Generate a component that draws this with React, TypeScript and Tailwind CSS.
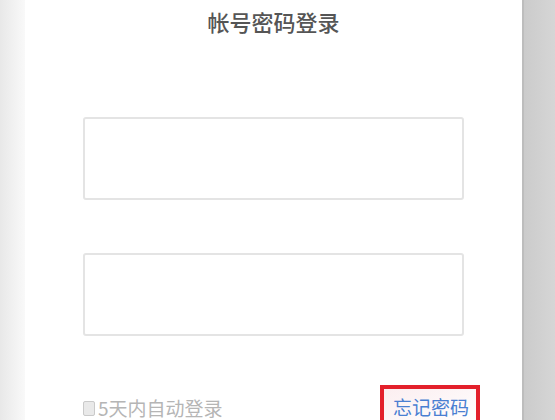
import React from 'react';

export default function App() {
  return (
    <div
      className="flex h-[420px] w-[555px] overflow-hidden bg-white"
      style={{ fontFamily: '"Noto Sans CJK SC", "Noto Sans", sans-serif' }}
    >
      {/* left backdrop */}
      <div className="w-[25px] shrink-0 bg-gradient-to-r from-[#e8e8e8] to-[#f9f9f9]" />

      {/* login card */}
      <div className="flex flex-1 flex-col bg-white">
        <h1 className="mt-[10px] text-center text-[22px] leading-[23px] font-medium text-[#555]">
          帐号密码登录
        </h1>

        <div className="mt-[84px] flex flex-col gap-[53px] px-[58px]">
          <input
            type="text"
            className="h-[83px] w-full rounded-[3px] border-2 border-[#e4e4e4] bg-white outline-none"
          />
          <input
            type="password"
            className="h-[83px] w-full rounded-[3px] border-2 border-[#e4e4e4] bg-white outline-none"
          />
        </div>

        <div className="mt-[49px] flex items-start justify-between pr-[42px] pl-[58px]">
          <label className="mt-[14px] flex items-center gap-[3px] text-[19px] leading-[18px] text-[#b5b5b5]">
            <span className="block h-[15px] w-[12px] shrink-0 rounded-[2px] border border-[#cacaca] bg-[#e9e9e9]" />
            5天内自动登录
          </label>
          <div className="h-[44px] w-[100px] border-4 border-[#e3202b] bg-gradient-to-br from-[#fbeef0] to-white pt-[8px] pl-[9px]">
            <a className="block text-[19px] leading-[19px] text-[#4a7fd2]">忘记密码</a>
          </div>
        </div>
      </div>

      {/* right backdrop */}
      <div className="w-[33px] shrink-0 border-l-2 border-[#bdbdbd] bg-gradient-to-r from-[#cbcbcb] to-[#d6d6d6]" />
    </div>
  );
}
